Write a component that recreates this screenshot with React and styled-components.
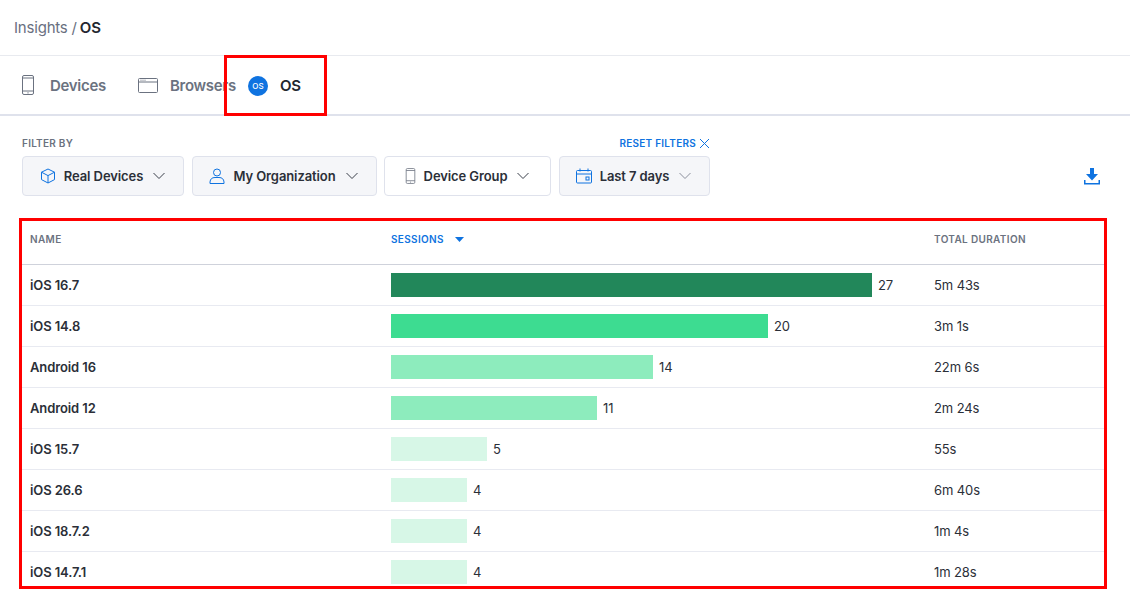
import React from "react";
import styled, { createGlobalStyle } from "styled-components";

const Global = createGlobalStyle`
  html, body { margin: 0; padding: 0; background: #fff; }
  body { width: 1130px; height: 592px; overflow: hidden; font-family: "Inter", "Open Sans", sans-serif; color: #23272f; }
  * { box-sizing: border-box; }
`;

const Page = styled.div`display: flex; flex-direction: column; width: 1130px; height: 592px; overflow: hidden;`;

const Crumbs = styled.header`
  flex: none; height: 56px; padding: 0 14px 1px; display: flex; align-items: center; gap: 4px;
  border-bottom: 1px solid #e8eaef; font-size: 15px; color: #69707f;
  letter-spacing: -0.2px;
`;
const CrumbCurrent = styled.strong`color: #23272f; font-weight: 600; margin-left: -1px;`;

const TabBar = styled.nav`
  flex: none; height: 60px; display: flex; align-items: stretch; border-bottom: 2px solid #dfe2ec;
`;
const Tab = styled.div`
  display: flex; align-items: center; gap: ${p => p.$gap}px; width: ${p => p.$width}px; padding-left: ${p => p.$pad}px;
  font-size: 15px; font-weight: 600; letter-spacing: -0.3px; color: #6b7280;
`;
const ActiveTab = styled(Tab)`
  color: #23272f; border: 3px solid #ff0000; height: 61px; margin-top: -1px; position: relative;
`;
const OsBadge = styled.span`
  width: 20px; height: 20px; border-radius: 50%; background: #0f73e0; color: #fff;
  font-size: 8px; font-weight: 500; letter-spacing: 0; display: flex; align-items: center; justify-content: center;
`;

const FilterSection = styled.section`
  flex: none; padding: 20px 22px 0; height: 102px; display: flex; justify-content: space-between; align-items: flex-start;
`;
const FilterGroup = styled.div`width: 688px; display: flex; flex-direction: column;`;
const FilterHead = styled.div`
  display: flex; justify-content: space-between; align-items: center; height: 14px; margin-bottom: 6px;
  font-size: 10px; font-weight: 600; letter-spacing: 0.25px;
`;
const FilterLabel = styled.span`color: #6b7280;`;
const Reset = styled.span`color: #0f73e0; display: flex; align-items: center; gap: 3px;`;
const Dropdowns = styled.div`display: flex; gap: 7.5px;`;
const Dropdown = styled.div`
  width: ${p => p.$width}px; height: 40px; border: 1px solid #dfe2ec; border-radius: 4px;
  background: ${p => (p.$plain ? "#fff" : "#f5f6f9")};
  display: flex; align-items: center; justify-content: center; gap: 8px;
  font-size: 13px; font-weight: 600; letter-spacing: -0.1px; color: #2b2f38; white-space: nowrap;
`;
const Chevron = styled.svg`width: 14px; height: 8px; margin-left: 1px; flex: none;`;
const DownloadWrap = styled.div`height: 40px; width: 40px; margin: 20px 0 0; transform: translateX(4px); display: flex; align-items: center; justify-content: center;`;

const TablePanel = styled.section`
  margin: 0 0 0 19px; width: 1088px; height: 371px; border: 3px solid #ff0000; overflow: hidden; flex: none;
`;
const HeadRow = styled.div`
  display: grid; grid-template-columns: 369px 543px 1fr; height: 44px; align-items: center; padding-bottom: 7px;
  border-bottom: 1px solid #cfd2db; font-size: 10px; font-weight: 600; letter-spacing: 0.35px; color: #6b7280;
`;
const HeadName = styled.span`padding-left: 8px;`;
const HeadSort = styled.span`color: #0f73e0; display: flex; align-items: center; gap: 11px;`;
const Row = styled.div`
  display: grid; grid-template-columns: 369px 543px 1fr; height: 41px; align-items: center;
  border-bottom: 1px solid #e8eaf1; font-size: 13px; letter-spacing: -0.1px; color: #2b2f38;
`;
const Name = styled.span`padding-left: 8px; font-weight: 600;`;
const BarCell = styled.div`display: flex; align-items: center; gap: 6px;`;
const Bar = styled.div`height: 24px; background: ${p => p.$color};`;
const Duration = styled.span`font-weight: 400;`;

const rows = [
  ["iOS 16.7", 27, 481, "#22875a", "5m 43s"],
  ["iOS 14.8", 20, 377, "#3ddc91", "3m 1s"],
  ["Android 16", 14, 262, "#8decbd", "22m 6s"],
  ["Android 12", 11, 206, "#8decbd", "2m 24s"],
  ["iOS 15.7", 5, 96, "#d7f7e7", "55s"],
  ["iOS 26.6", 4, 76, "#d7f7e7", "6m 40s"],
  ["iOS 18.7.2", 4, 76, "#d7f7e7", "1m 4s"],
  ["iOS 14.7.1", 4, 76, "#d7f7e7", "1m 28s"],
];

const Down = ({ color = "#3a3f4a" }) => (
  <Chevron viewBox="0 0 14 8" fill="none" stroke={color} strokeWidth="1"><path d="M1.5 1l5.5 5.5L12.5 1" /></Chevron>
);
const Phone = ({ w = 14, h = 20, c = "#6b7280" }) => (
  <svg width={w} height={h} viewBox="0 0 14 20" fill="none" stroke={c} strokeWidth="1" style={{ flex: "none" }}>
    <rect x="1.5" y="0.5" width="11" height="19" rx="1.5" /><path d="M1.5 3h11M1.5 16h11" /><path d="M6.5 17.8h1" strokeWidth="1.2" />
  </svg>
);

export default function App() {
  return (
    <Page>
      <Global />
      <Crumbs>Insights / <CrumbCurrent>OS</CrumbCurrent></Crumbs>
      <TabBar>
        <Tab $width={117} $pad={21} $gap={15}><Phone />Devices</Tab>
        <Tab $width={107} $pad={21} $gap={12}>
          <svg width="20" height="15" viewBox="0 0 20 15" fill="none" stroke="#6b7280" strokeWidth="1" style={{ flex: "none" }}>
            <rect x="0.5" y="0.5" width="19" height="14" rx="1" /><path d="M0.5 4h19" /><path d="M2.5 2.2h1M4.5 2.2h1M6.5 2.2h1" />
          </svg>
          Browsers
        </Tab>
        <ActiveTab $width={103} $pad={21} $gap={12}><OsBadge>OS</OsBadge>OS</ActiveTab>
      </TabBar>
      <FilterSection>
        <FilterGroup>
          <FilterHead>
            <FilterLabel>FILTER BY</FilterLabel>
            <Reset>RESET FILTERS
              <svg width="11" height="11" viewBox="0 0 11 11" stroke="#0f73e0" strokeWidth="1" fill="none"><path d="M1 1l9 9M10 1l-9 9" /></svg>
            </Reset>
          </FilterHead>
          <Dropdowns>
            <Dropdown $width={162}>
              <svg width="16" height="16" viewBox="0 0 16 16" fill="none" stroke="#0f73e0" strokeWidth="1"><path d="M8 1l6.5 3.2v7.4L8 15l-6.5-3.4V4.2L8 1zM1.5 4.2L8 7.6l6.5-3.4M8 7.6V15" /></svg>
              Real Devices<Down />
            </Dropdown>
            <Dropdown $width={185}>
              <svg width="16" height="16" viewBox="0 0 16 16" fill="none" stroke="#0f73e0" strokeWidth="1"><circle cx="8" cy="4.5" r="3.5" /><path d="M1 15.5v-1.5a5 5 0 0 1 5-4.5h4a5 5 0 0 1 5 4.5v1.5z" /></svg>
              My Organization<Down />
            </Dropdown>
            <Dropdown $width={167} $plain>
              <Phone w={11} h={16} />
              Device Group<Down />
            </Dropdown>
            <Dropdown $width={151}>
              <svg width="16" height="16" viewBox="0 0 16 16" fill="none" stroke="#0f73e0" strokeWidth="1"><rect x="0.5" y="2.5" width="15" height="12.5" rx="1" /><path d="M0.5 6h15M4 0.5v3M12 0.5v3" /><rect x="10" y="9" width="3" height="3" /></svg>
              Last 7 days<Down color="#8a8f9c" />
            </Dropdown>
          </Dropdowns>
        </FilterGroup>
        <DownloadWrap>
          <svg width="16" height="17" viewBox="0 0 16 17" fill="#0f73e0"><path d="M6 0h4v6h4l-6 6.5L2 6h4z" /><path d="M0 12h1.5v3h13v-3H16v4.5H0z" /></svg>
        </DownloadWrap>
      </FilterSection>
      <TablePanel>
        <HeadRow>
          <HeadName>NAME</HeadName>
          <HeadSort>SESSIONS
            <svg width="9" height="5" viewBox="0 0 9 5" fill="#0f73e0"><path d="M0 0h9L4.5 5z" /></svg>
          </HeadSort>
          <span>TOTAL DURATION</span>
        </HeadRow>
        {rows.map(([name, count, width, color, duration]) => (
          <Row key={name}>
            <Name>{name}</Name>
            <BarCell><Bar $color={color} style={{ width }} />{count}</BarCell>
            <Duration>{duration}</Duration>
          </Row>
        ))}
      </TablePanel>
    </Page>
  );
}
